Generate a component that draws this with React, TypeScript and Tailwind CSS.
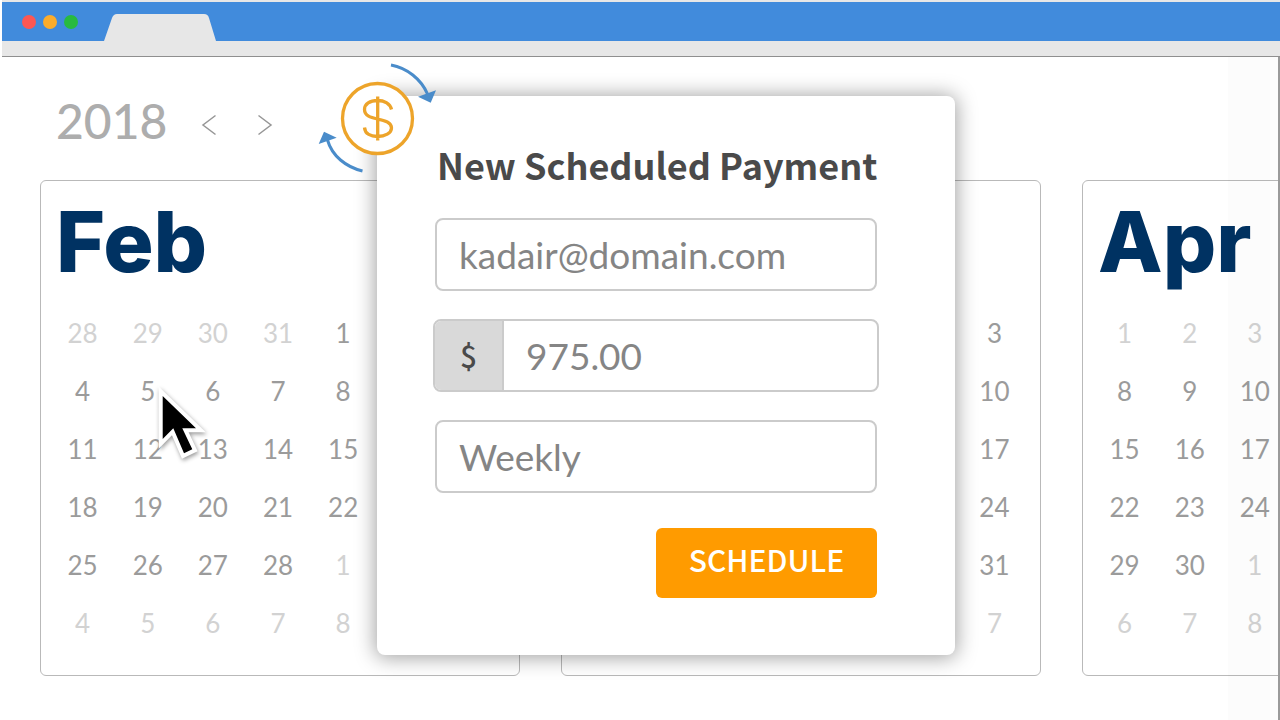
import { useState } from 'react';
import clsx from 'clsx';

type Month = {
  name: string;
  lead: number[];
  days: number;
  muteFirstWeek?: boolean;
};

const months: Month[] = [
  { name: 'Feb', lead: [28, 29, 30, 31], days: 28 },
  { name: 'Mar', lead: [25, 26, 27, 28], days: 31 },
  { name: 'Apr', lead: [], days: 30, muteFirstWeek: true },
];

function getWeeks({ lead, days, muteFirstWeek }: Month) {
  const cells = Array.from({ length: 42 }, (_, i) => {
    if (i < lead.length) return { day: lead[i], muted: true };
    const day = i - lead.length + 1;
    if (day > days) return { day: day - days, muted: true };
    return { day, muted: !!muteFirstWeek && i < 7 };
  });

  return Array.from({ length: 6 }, (_, week) => cells.slice(week * 7, week * 7 + 7));
}

function BrowserBar() {
  return (
    <header className="ml-0.5 border-b border-[#8f8f8f] bg-[#e7e7e7] pb-[15px]">
      <div className="mt-0.5 flex h-[39px] items-end bg-[#418bdc]">
        <div className="flex gap-[7px] self-center pl-5">
          <span className="size-3.5 rounded-full bg-[#fc5753]" />
          <span className="size-3.5 rounded-full bg-[#fbac2b]" />
          <span className="size-3.5 rounded-full bg-[#28ba40]" />
        </div>
        <svg className="ml-[26px] h-[27px] w-28" viewBox="0 0 112 27" fill="#e7e7e7">
          <path d="M0 27 L8 4 Q9.500 0 13 0 H100 Q104 0 105 4 L112 27 Z" />
        </svg>
      </div>
    </header>
  );
}

function YearNav({ year, onChange }: { year: number; onChange: (year: number) => void }) {
  return (
    <div className="flex h-[70px] items-center pl-4">
      <span className="text-5xl font-medium text-[#adadad]">{year}</span>
      <div className="flex gap-8 pt-2 pl-[30px]">
        <button type="button" aria-label="Previous year" onClick={() => onChange(year - 1)}>
          <svg className="h-6 w-6" viewBox="0 0 24 24" fill="none" stroke="#969696" strokeWidth="1.500">
            <path d="M18.500 2.500 L6 12 L18.500 21.500" />
          </svg>
        </button>
        <button type="button" aria-label="Next year" onClick={() => onChange(year + 1)}>
          <svg className="h-6 w-6" viewBox="0 0 24 24" fill="none" stroke="#969696" strokeWidth="1.500">
            <path d="M5.500 2.500 L18 12 L5.500 21.500" />
          </svg>
        </button>
      </div>
    </div>
  );
}

function Calendar({ month }: { month: Month }) {
  return (
    <section className="w-[480px] shrink-0 rounded-md border border-[#b9b9b9] pt-[18px] pr-[13px] pb-[23px] pl-[9px]">
      <h2 className="mb-[19px] pl-1.5 font-['Inter',sans-serif] text-[84px] leading-[86px] font-extrabold text-[#003262]">
        {month.name}
      </h2>

      <table className="w-full table-fixed text-center text-[26px] leading-8 text-[#9b9b9b]">
        <tbody>
          {getWeeks(month).map((week, i) => (
            <tr key={i} className="h-[58px]">
              {week.map(({ day, muted }, j) => (
                <td key={j} className={clsx('p-0', muted && 'text-[#d2d2d2]')}>
                  {day}
                </td>
              ))}
            </tr>
          ))}
        </tbody>
      </table>
    </section>
  );
}

function IconRecurring() {
  return (
    <svg className="absolute -top-[34px] -left-[61px] h-[116px] w-[124px]" viewBox="0 0 124 116" fill="none">
      <circle cx="61.500" cy="56.500" r="35" fill="#fff" stroke="#eda42a" strokeWidth="3.300" />
      <path
        d="M75.500 47.500 C74 41.500 68 38.500 61.500 38.500 C54 38.500 48.500 42 48.500 47.500 C48.500 54 55 55.500 61.500 57 C69 58.500 75.500 60.500 75.500 66 C75.500 71 69 74.500 61.500 74.500 C55 74.500 49 72 48.500 65.500 M61.700 34.500 V78.500"
        stroke="#eda42a"
        strokeWidth="3.300"
      />
      <path d="M75 3 C91 6 105 17 111.500 32 M46.500 109 C30 105 16 94 11.500 78" stroke="#4a8cca" strokeWidth="3" />
      <path d="M114.700 40.700 L102 34.700 L120 28.300 Z M8 69.700 L2.700 82 L20.700 75.700 Z" fill="#4a8cca" />
    </svg>
  );
}

function PaymentForm() {
  return (
    <form
      className="relative flex w-[578px] flex-col rounded-lg bg-white pt-10 pr-[78px] pb-[57px] pl-[58px] shadow-[0_1px_20px_2px_rgba(0,0,0,0.36)]"
      onSubmit={(e) => e.preventDefault()}
    >
      <IconRecurring />

      <h1 className="pl-0.5 font-['Noto_Sans_CJK_SC',sans-serif] text-[36px] leading-[56px] font-bold whitespace-nowrap text-[#4a4a4a]">
        New Scheduled Payment
      </h1>

      <div className="mt-[26px] flex flex-col gap-7 text-[37px] text-[#858585]">
        <input
          type="email"
          aria-label="Email"
          defaultValue="kadair@domain.com"
          className="h-[73px] rounded-lg border-2 border-[#cbcbcb] px-[22px] outline-none"
        />

        <div className="-mx-0.5 flex h-[73px] overflow-hidden rounded-lg border-2 border-[#cbcbcb]">
          <label
            htmlFor="amount"
            className="flex w-[69px] items-center justify-center border-r-2 border-[#cbcbcb] bg-[#d9d9d9] font-['Noto_Sans_CJK_SC',sans-serif] text-[30px] font-medium text-[#4a4a4a]"
          >
            $
          </label>
          <input id="amount" defaultValue="975.00" className="min-w-0 flex-1 px-[22px] outline-none" />
        </div>

        <select
          aria-label="Frequency"
          className="h-[73px] appearance-none rounded-lg border-2 border-[#cbcbcb] bg-white px-[22px] outline-none"
        >
          <option>Weekly</option>
          <option>Monthly</option>
        </select>
      </div>

      <button
        type="submit"
        className="mt-[35px] h-[70px] w-[221px] self-end rounded-md bg-[#ff9b00] pb-2 font-['Noto_Sans_CJK_SC',sans-serif] text-[30px] font-medium text-white"
      >
        SCHEDULE
      </button>
    </form>
  );
}

function Cursor() {
  return (
    <svg
      className="pointer-events-none absolute top-[323px] left-[152px] h-[88px] w-[60px] drop-shadow-[1px_2px_2px_rgba(0,0,0,0.4)]"
      viewBox="0 0 60 88"
    >
      <path
        d="M8.700 16 V59 L19.300 48.300 L30 73.300 L38.300 69.300 L28.300 48.300 H42 Z"
        fill="#000"
        stroke="#fff"
        strokeWidth="8"
        strokeMiterlimit="10"
        paintOrder="stroke"
      />
    </svg>
  );
}

function App() {
  const [year, setYear] = useState(2018);

  return (
    <div className="flex min-h-screen flex-col overflow-hidden bg-white font-['Lato',sans-serif]">
      <BrowserBar />

      <main className="relative ml-0.5 flex-1 overflow-hidden border-r-2 border-[#9a9a9a] pt-[29px] pb-11 pl-[38px]">
        <YearNav year={year} onChange={setYear} />

        <div className="mt-6 flex gap-[41px]">
          {months.map((month) => (
            <Calendar key={month.name} month={month} />
          ))}
        </div>

        <div className="pointer-events-none absolute inset-y-0 right-0 w-[50px] bg-black/1" />

        <div className="absolute inset-x-0 top-[39px] flex justify-center pl-[52px]">
          <PaymentForm />
        </div>

        <Cursor />
      </main>
    </div>
  );
}

export default App;
